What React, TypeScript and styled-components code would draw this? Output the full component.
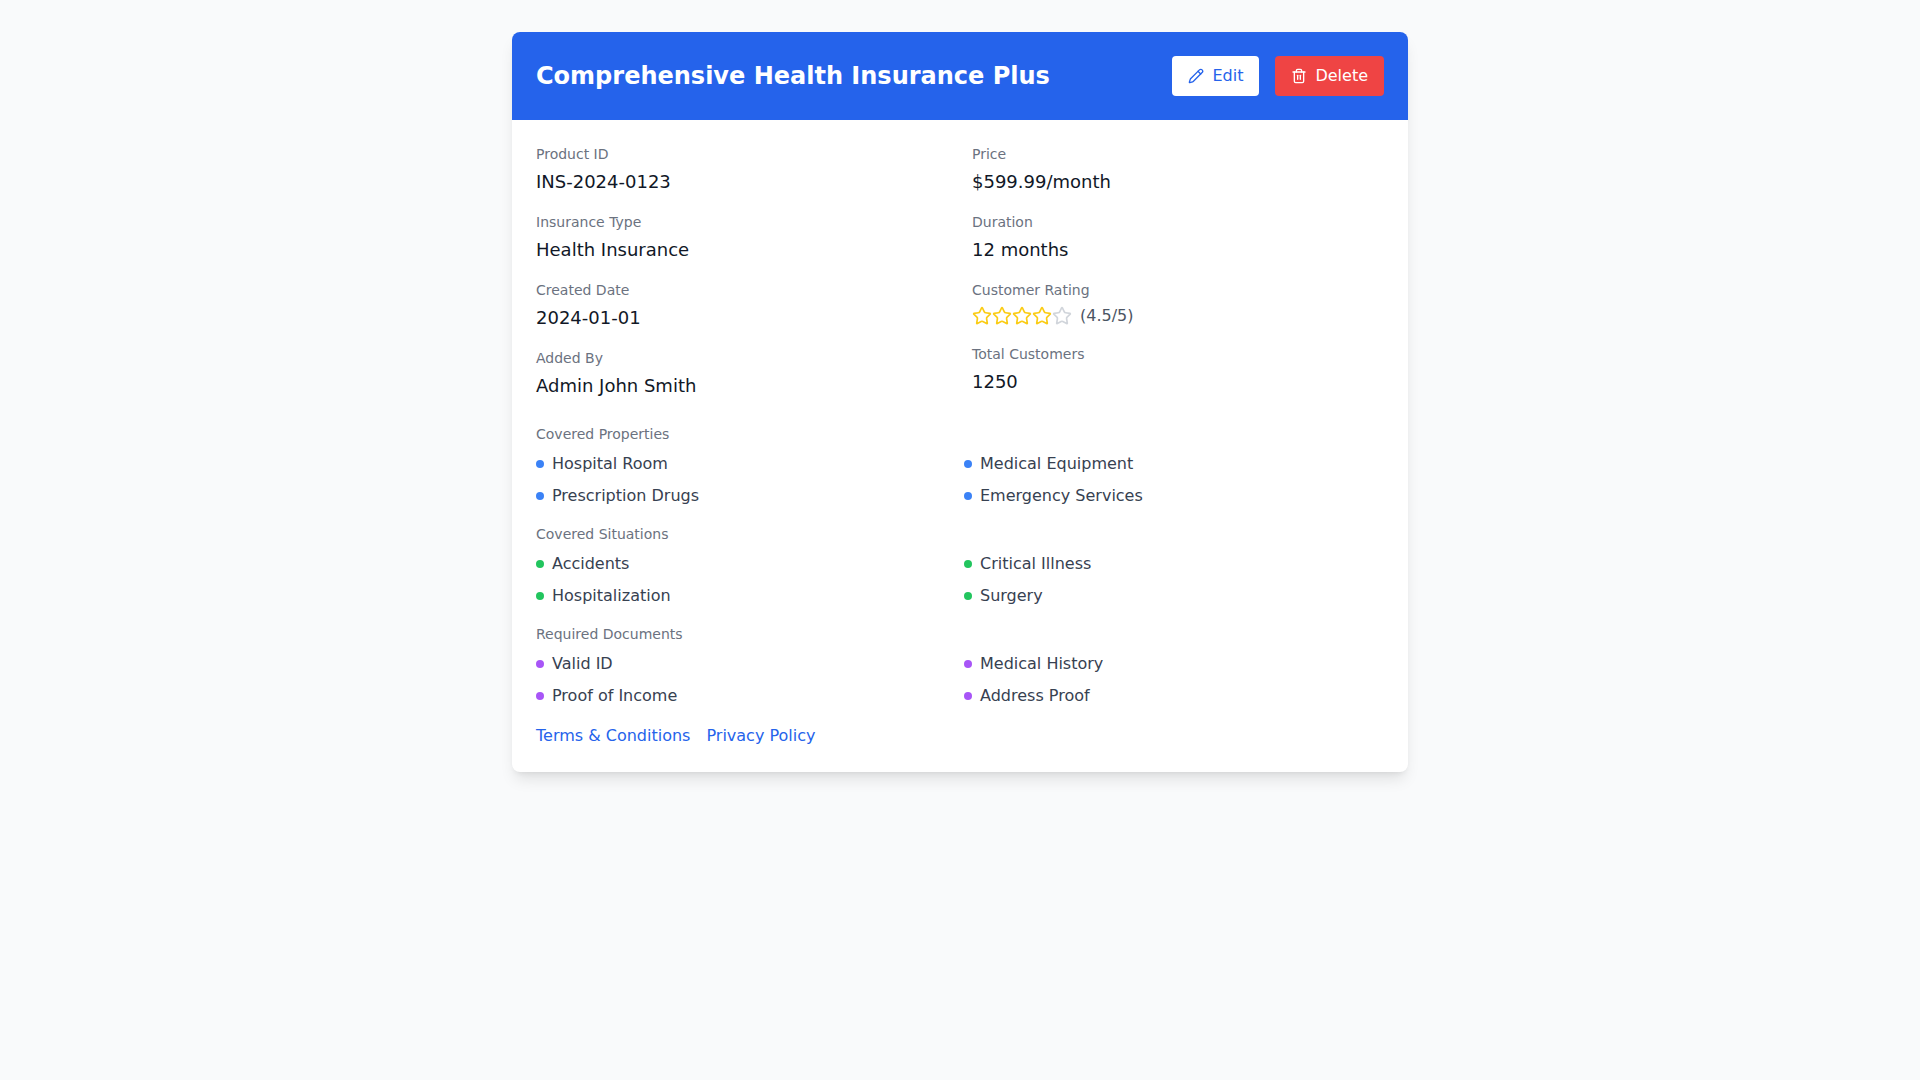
import React from 'react';
import styled, { createGlobalStyle } from 'styled-components';
import { Pencil, Star, Trash2 } from 'lucide-react';

const GlobalStyle = createGlobalStyle`
  * { box-sizing: border-box; }
  body {
    margin: 0;
    background: #f9fafb;
    font-family: "DejaVu Sans", sans-serif;
    line-height: 24px;
  }
`;

const Page = styled.div`
  min-height: 100vh;
  padding: 32px 0;
`;

const Card = styled.div`
  width: 896px;
  margin: 0 auto;
  background: #fff;
  border-radius: 8px;
  overflow: hidden;
  box-shadow: 0 10px 15px -3px rgba(0, 0, 0, 0.1), 0 4px 6px -4px rgba(0, 0, 0, 0.1);
`;

const Header = styled.header`
  display: flex;
  justify-content: space-between;
  align-items: center;
  padding: 24px;
  background: #2563eb;
`;

const Title = styled.h1`
  margin: 0;
  font-size: 24px;
  line-height: 32px;
  font-weight: 700;
  color: #fff;
`;

const Actions = styled.div`
  display: flex;
  gap: 16px;
`;

const ActionButton = styled.button<{ $danger?: boolean }>`
  display: flex;
  align-items: center;
  gap: 8px;
  padding: 8px 16px;
  border: 0;
  border-radius: 4px;
  font: inherit;
  background: ${(props) => (props.$danger ? '#ef4444' : '#fff')};
  color: ${(props) => (props.$danger ? '#fff' : '#2563eb')};
`;

const Body = styled.div`
  padding: 24px;
`;

const InfoGrid = styled.div`
  display: grid;
  grid-template-columns: 1fr 1fr;
  gap: 24px;
`;

const InfoColumn = styled.div`
  display: flex;
  flex-direction: column;
  gap: 16px;
`;

const Label = styled.div`
  font-size: 14px;
  line-height: 20px;
  color: #6b7280;
`;

const InfoLabel = styled(Label)`
  margin-bottom: 4px;
`;

const Value = styled.div`
  font-size: 18px;
  line-height: 28px;
  color: #111827;
`;

const RatingRow = styled.div`
  display: flex;
  align-items: center;
  color: #4b5563;
`;

const RatingText = styled.span`
  margin-left: 8px;
`;

const Sections = styled.div`
  display: flex;
  flex-direction: column;
  gap: 16px;
  margin-top: 24px;
`;

const TagGrid = styled.ul`
  display: grid;
  grid-template-columns: 1fr 1fr;
  gap: 8px;
  margin: 8px 0 0;
  padding: 0;
  list-style: none;
`;

const TagItem = styled.li`
  display: flex;
  align-items: center;
  color: #374151;
`;

const Dot = styled.span<{ $color: string }>`
  width: 8px;
  height: 8px;
  margin-right: 8px;
  border-radius: 50%;
  background: ${(props) => props.$color};
`;

const Links = styled.div`
  display: flex;
  gap: 16px;
  margin-top: 16px;
`;

const DocLink = styled.a`
  color: #2563eb;
  text-decoration: none;
`;

const leftInfo = [
  ['Product ID', 'INS-2024-0123'],
  ['Insurance Type', 'Health Insurance'],
  ['Created Date', '2024-01-01'],
  ['Added By', 'Admin John Smith'],
];

const sections = [
  { title: 'Covered Properties', color: '#3b82f6', items: ['Hospital Room', 'Medical Equipment', 'Prescription Drugs', 'Emergency Services'] },
  { title: 'Covered Situations', color: '#22c55e', items: ['Accidents', 'Critical Illness', 'Hospitalization', 'Surgery'] },
  { title: 'Required Documents', color: '#a855f7', items: ['Valid ID', 'Medical History', 'Proof of Income', 'Address Proof'] },
];

const InfoBlock = ({ label, children }: { label: string; children: React.ReactNode }) => (
  <div>
    <InfoLabel>{label}</InfoLabel>
    {children}
  </div>
);

export default function App() {
  return (
    <Page>
      <GlobalStyle />
      <Card>
        <Header>
          <Title>Comprehensive Health Insurance Plus</Title>
          <Actions>
            <ActionButton>
              <Pencil size={16} />
              Edit
            </ActionButton>
            <ActionButton $danger>
              <Trash2 size={16} />
              Delete
            </ActionButton>
          </Actions>
        </Header>
        <Body>
          <InfoGrid>
            <InfoColumn>
              {leftInfo.map(([label, value]) => (
                <InfoBlock key={label} label={label}>
                  <Value>{value}</Value>
                </InfoBlock>
              ))}
            </InfoColumn>
            <InfoColumn>
              <InfoBlock label="Price">
                <Value>$599.99/month</Value>
              </InfoBlock>
              <InfoBlock label="Duration">
                <Value>12 months</Value>
              </InfoBlock>
              <InfoBlock label="Customer Rating">
                <RatingRow>
                  {[0, 1, 2, 3, 4].map((i) => (
                    <Star key={i} size={20} color={i < 4 ? '#facc15' : '#d1d5db'} />
                  ))}
                  <RatingText>(4.5/5)</RatingText>
                </RatingRow>
              </InfoBlock>
              <InfoBlock label="Total Customers">
                <Value>1250</Value>
              </InfoBlock>
            </InfoColumn>
          </InfoGrid>
          <Sections>
            {sections.map((section) => (
              <div key={section.title}>
                <Label>{section.title}</Label>
                <TagGrid>
                  {section.items.map((item) => (
                    <TagItem key={item}>
                      <Dot $color={section.color} />
                      {item}
                    </TagItem>
                  ))}
                </TagGrid>
              </div>
            ))}
          </Sections>
          <Links>
            <DocLink href="#">Terms &amp; Conditions</DocLink>
            <DocLink href="#">Privacy Policy</DocLink>
          </Links>
        </Body>
      </Card>
    </Page>
  );
}
